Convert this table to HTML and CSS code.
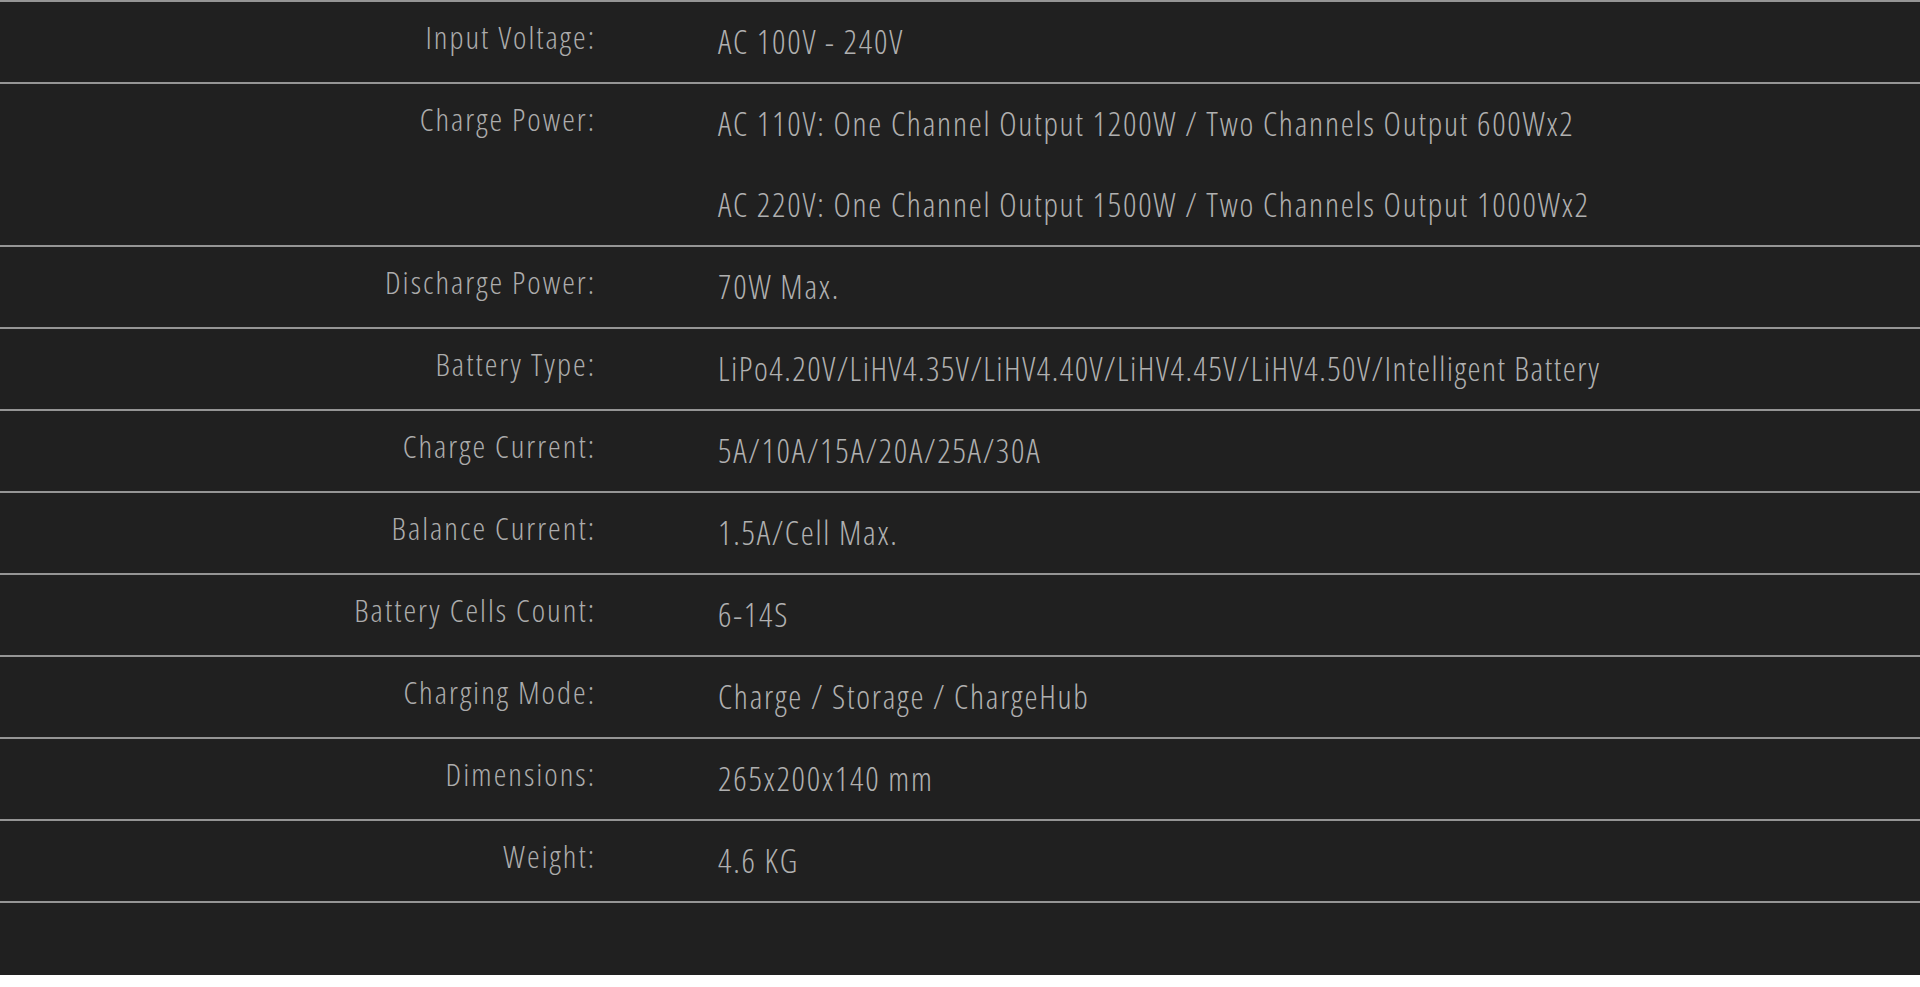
FILE: index.html
```html
<!DOCTYPE html>
<html lang="en">
<head>
<meta charset="utf-8">
<title>Specifications</title>
<link rel="stylesheet" href="styles.css">
</head>
<body>
<section class="specs">
  <div class="spec-list">
    <div class="row">
      <div class="label">Input Voltage:</div>
      <div class="value"><p>AC 100V - 240V</p></div>
    </div>
    <div class="row">
      <div class="label">Charge Power:</div>
      <div class="value">
        <p>AC 110V: One Channel Output 1200W / Two Channels Output 600Wx2</p>
        <p>AC 220V: One Channel Output 1500W / Two Channels Output 1000Wx2</p>
      </div>
    </div>
    <div class="row">
      <div class="label">Discharge Power:</div>
      <div class="value"><p>70W Max.</p></div>
    </div>
    <div class="row">
      <div class="label">Battery Type:</div>
      <div class="value"><p class="tight">LiPo4.20V/LiHV4.35V/LiHV4.40V/LiHV4.45V/LiHV4.50V/Intelligent Battery</p></div>
    </div>
    <div class="row">
      <div class="label">Charge Current:</div>
      <div class="value"><p>5A/10A/15A/20A/25A/30A</p></div>
    </div>
    <div class="row">
      <div class="label">Balance Current:</div>
      <div class="value"><p>1.5A/Cell Max.</p></div>
    </div>
    <div class="row">
      <div class="label">Battery Cells Count:</div>
      <div class="value"><p>6-14S</p></div>
    </div>
    <div class="row">
      <div class="label">Charging Mode:</div>
      <div class="value"><p>Charge / Storage / ChargeHub</p></div>
    </div>
    <div class="row">
      <div class="label">Dimensions:</div>
      <div class="value"><p>265x200x140 mm</p></div>
    </div>
    <div class="row">
      <div class="label">Weight:</div>
      <div class="value"><p>4.6 KG</p></div>
    </div>
  </div>
</section>
</body>
</html>
```
FILE: styles.css
```css
html, body {
  margin: 0;
  padding: 0;
  background: #ffffff;
}

.specs {
  background: #202020;
  height: 975px;
  box-sizing: border-box;
  font-family: "Open Sans", "DejaVu Sans", sans-serif;
  font-stretch: 75%;
  font-weight: 300;
}

.spec-list {
  border-bottom: 2px solid #959595;
}

.row {
  display: grid;
  grid-template-columns: 596px 1fr;
  column-gap: 122px;
  border-top: 2px solid #959595;
  min-height: 80px;
}

.label {
  text-align: right;
  color: #acacac;
  font-size: 32px;
  line-height: 70px;
  letter-spacing: 2px;
  white-space: nowrap;
}

.value p {
  margin: 0;
  color: #b0b0b0;
  font-size: 33px;
  line-height: 80px;
  letter-spacing: 1.75px;
  white-space: nowrap;
}

.value p.tight {
  letter-spacing: 1.5px;
}

.value p + p {
  margin-top: 1px;
}
```
